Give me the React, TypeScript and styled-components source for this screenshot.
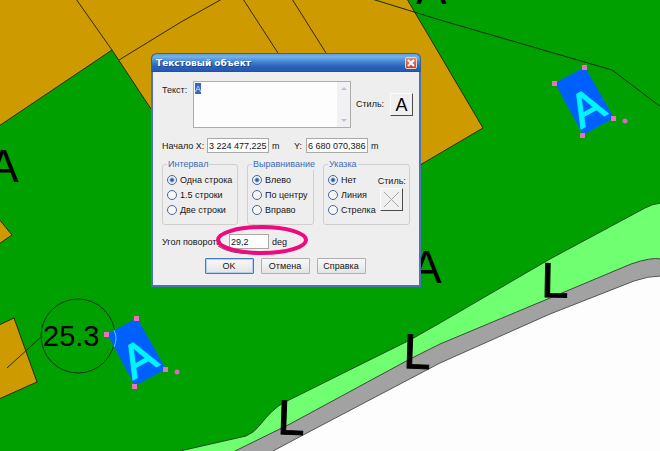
import React, { useState } from "react";
import styled, { createGlobalStyle } from "styled-components";

const GlobalStyle = createGlobalStyle`
  * { box-sizing: border-box; }
  html, body, #root { height: 100%; margin: 0; }
  body { overflow: hidden; background: #00a000; }
  button, input, textarea { font: inherit; color: inherit; }
`;

const Workspace = styled.main`
  position: relative;
  width: 100%;
  height: 100vh;
  overflow: hidden;
  font: 9px/12px "Liberation Sans", Arial, sans-serif;
  color: #161616;
`;

const MapCanvas = styled.svg`
  display: block;
  width: 100%;
  height: 100%;
  font-family: "Liberation Sans", Arial, sans-serif;
`;

const Dialog = styled.section`
  position: absolute;
  left: 151px;
  top: 53px;
  width: 270px;
  border: 2px solid #4b74b8;
  border-top-width: 0;
  border-radius: 6px 6px 0 0;
  background: #eeeeee;
`;

const TitleBar = styled.header`
  display: flex;
  align-items: center;
  justify-content: space-between;
  height: 19px;
  margin: 0 -2px;
  padding: 1px 3px 0 4px;
  border: 1px solid #376197;
  border-bottom-color: #264f9e;
  border-radius: 6px 6px 0 0;
  background: linear-gradient(#5c9ee0 0%, #74b2ec 16%, #4485d0 45%, #2a62b8 75%, #2458b4 100%);
`;

const Title = styled.h1`
  margin: 0;
  font: bold 9px/16px "DejaVu Sans", Verdana, sans-serif;
  color: #ffffff;
  text-shadow: 1px 1px #1c458c;
`;

const CloseButton = styled.button`
  display: flex;
  align-items: center;
  justify-content: center;
  width: 12px;
  height: 12px;
  padding: 0;
  border: 1px solid #f0cfc8;
  border-radius: 2px;
  background: linear-gradient(#dc8d7c, #c6442f);
`;

const Form = styled.form`
  display: flex;
  flex-direction: column;
  padding: 9px 6px 11px 9px;
`;

const TextRow = styled.div`
  display: flex;
  align-items: flex-start;
`;

const FieldLabel = styled.label<{ $width?: number }>`
  flex: none;
  width: ${(p) => (p.$width ? `${p.$width}px` : "auto")};
  white-space: nowrap;
`;

const TextLabel = styled(FieldLabel)`
  padding-top: 3px;
`;

const TextBox = styled.div`
  display: flex;
  flex: 1;
  height: 47px;
  border: 1px solid #adadad;
  background: #fdfdfd;
`;

const SelectedText = styled.div`
  flex: 1;
  display: grid;
  min-width: 0;
  > * { grid-area: 1 / 1; }
`;

const Selection = styled.span`
  width: 6px;
  height: 11px;
  margin: 1px 0 0 1px;
  background: #2f68c0;
`;

const TextArea = styled.textarea`
  z-index: 1;
  width: 100%;
  height: 100%;
  padding: 1px;
  border: 0;
  outline: 0;
  resize: none;
  overflow: hidden;
  background: transparent;
  color: #e4eefc;
`;

const ScrollTrack = styled.span`
  display: flex;
  flex-direction: column;
  justify-content: space-between;
  align-items: center;
  width: 13px;
  padding: 5px 0;
  background: #f1f1f3;
`;

const StyleLabel = styled.label`
  width: 39px;
  padding: 17px 0 0 5px;
`;

const StyleButton = styled.button`
  display: flex;
  align-items: center;
  justify-content: center;
  width: 23px;
  height: 23px;
  padding: 0;
  border: 1px solid #fbfbfb;
  border-right-color: #4c4c4c;
  border-bottom-color: #4c4c4c;
  background: #f0f0f0;
  font-size: 18px;
  line-height: 20px;
  color: #000000;
`;

const TextStyleButton = styled(StyleButton)`
  margin-top: 12px;
`;

const OriginRow = styled.div`
  display: flex;
  align-items: center;
  margin-top: 10px;
  gap: 3px;
`;

const NumberInput = styled.input<{ $width: number }>`
  width: ${(p) => p.$width}px;
  height: 15px;
  padding: 0 1px;
  border: 1px solid #a9a9a9;
  outline: 0;
  background: #fdfdfd;
`;

const Unit = styled.span<{ $width?: number }>`
  width: ${(p) => (p.$width ? `${p.$width}px` : "auto")};
`;

const Groups = styled.div`
  display: grid;
  grid-template-columns: 76fr 67fr 87fr;
  gap: 9px;
  margin: 6px 3px 0 0;
`;

const Group = styled.fieldset`
  display: flex;
  gap: 2px;
  min-width: 0;
  height: 66px;
  margin: 0;
  padding: 2px 4px 0;
  border: 1px solid #cfcfcf;
  border-radius: 3px;
`;

const Legend = styled.legend`
  padding: 0 1px;
  line-height: 11px;
  color: #3c6cb4;
`;

const Options = styled.div`
  display: flex;
  flex-direction: column;
  gap: 3px;
  padding-top: 2px;
`;

const Option = styled.label`
  display: flex;
  align-items: center;
  gap: 3px;
  white-space: nowrap;
`;

const Radio = styled.input`
  appearance: none;
  flex: none;
  width: 10px;
  height: 10px;
  margin: 0;
  border: 1px solid #476696;
  border-radius: 50%;
  background: #f6f6f6;
  &:checked { background: radial-gradient(circle, #245ca8 0 1px, #f6f6f6 3px); }
`;

const PointerStyle = styled.div`
  display: flex;
  flex-direction: column;
  align-items: center;
  gap: 1px;
  padding-top: 3px;
`;

const AngleRow = styled.div`
  position: relative;
  display: flex;
  align-items: center;
  margin-top: 9px;
  gap: 3px;
`;

const Highlight = styled.svg`
  position: absolute;
  left: 51px;
  top: -10px;
  pointer-events: none;
`;

const Actions = styled.div`
  display: flex;
  justify-content: center;
  gap: 7px;
  margin: 9px 5px 0 0;
`;

const ActionButton = styled.button<{ $primary?: boolean }>`
  width: 49px;
  height: 16px;
  padding: 0;
  border: 1px solid ${(p) => (p.$primary ? "#4d78bc" : "#b0b0b0")};
  border-radius: 1px;
  box-shadow: ${(p) => (p.$primary ? "inset 0 0 0 1px #b4cdf0" : "none")};
  background: linear-gradient(#f8f8f8, #e4e4e4);
  line-height: 13px;
`;

function SelectedObject({ x, y }: { x: number; y: number }) {
  const handles = [[0, 0], [30, -16], [59, 35], [28, 52]];
  return (
    <g transform={`translate(${x} ${y})`}>
      <polygon points="0,0 30,-16 59,35 28,52" fill="#0060ff" />
      <text transform="translate(26 46) rotate(-29.2)" fontSize="47" fill="#00f6ff" stroke="#00f6ff">A</text>
      {handles.map(([hx, hy]) => (
        <rect key={hx} x={hx - 3} y={hy - 2} width="5" height="5" fill="#ea72b8" />
      ))}
      <circle cx="70" cy="38" r="2.5" fill="#d868c4" />
    </g>
  );
}

function TerrainMap() {
  return (
    <MapCanvas viewBox="0 0 660 451" preserveAspectRatio="xMidYMid slice" role="img" aria-label="Карта">
      <rect width="660" height="451" fill="#00a000" />
      <g fill="#cd9a00" stroke="#2b2700" strokeWidth="1">
        <path d="M-1 -1H407L483 128L330 218L151 109L112 50L-1 126Z" />
        <path d="M-1 219L12 235L-1 244Z" />
        <path d="M-1 325L14 318L37 382L-1 399Z" />
      </g>
      <g fill="none" stroke="#33280a">
        <path d="M76 -1L112 50M119 60L181 22L222 -1M243 -1L278 53M292 -1L326 53" />
        <path d="M372 -1L440 20L612 70L661 107" stroke="#102d08" />
      </g>
      <path d="M180 451L246 436Q254 433 260 425Q273 408 285 402L410 340L440 323L550 259L645 208Q652 204 661 203V460H180Z" fill="#70ff70" stroke="#1e4e1e" />
      <path d="M235 451L290 424L410 359L440 344L550 298L631 264Q651 257 661 259V460H235Z" fill="#a2a2a2" stroke="#3e4a3e" />
      <path d="M273 451L305 434L440 363L550 314L634 281Q648 276 661 276V460H273Z" fill="#fdfdfd" stroke="#555555" />
      <circle cx="78" cy="336" r="37" fill="none" stroke="#103410" />
      <path d="M7 368L41 337" stroke="#22300a" />
      <text x="43" y="346" fontSize="29">25.3</text>
      <g fontSize="46">
        <text x="-12" y="182">A</text>
        <text x="416" y="4">A</text>
        <text x="411" y="283">A</text>
      </g>
      <g fontSize="49" stroke="#000000" strokeWidth="1">
        <text transform="translate(277 434) rotate(2)">L</text>
        <text transform="translate(403 368) rotate(2)">L</text>
        <text transform="translate(541 297) rotate(1)">L</text>
      </g>
      <SelectedObject x={107} y={334} />
      <path d="M114 330Q118 338 114 347" fill="none" stroke="#5dcfee" />
      <SelectedObject x={555} y={83} />
    </MapCanvas>
  );
}

function RadioGroup({ name, options }: { name: string; options: string[] }) {
  return (
    <Options>
      {options.map((option, index) => (
        <Option key={option}>
          <Radio type="radio" name={name} defaultChecked={index === 0} />
          {option}
        </Option>
      ))}
    </Options>
  );
}

export default function App() {
  const [text, setText] = useState("A");
  return (
    <Workspace>
      <GlobalStyle />
      <TerrainMap />
      <Dialog role="dialog" aria-labelledby="dialog-title">
        <TitleBar>
          <Title id="dialog-title">Текстовый объект</Title>
          <CloseButton type="button" aria-label="Закрыть">
            <svg width="8" height="8" viewBox="0 0 8 8" stroke="#ffffff" strokeWidth="2"><path d="M1 1L7 7M7 1L1 7" /></svg>
          </CloseButton>
        </TitleBar>
        <Form onSubmit={(e) => e.preventDefault()}>
          <TextRow>
            <TextLabel htmlFor="object-text" $width={31}>Текст:</TextLabel>
            <TextBox>
              <SelectedText>
                <Selection />
                <TextArea id="object-text" value={text} onChange={(e) => setText(e.target.value)} />
              </SelectedText>
              <ScrollTrack>
                <svg width="6" height="3" fill="#b4c8e0"><path d="M3 0L6 3H0Z" /></svg>
                <svg width="6" height="3" fill="#b4c8e0"><path d="M0 0H6L3 3Z" /></svg>
              </ScrollTrack>
            </TextBox>
            <StyleLabel htmlFor="text-style">Стиль:</StyleLabel>
            <TextStyleButton id="text-style" type="button">A</TextStyleButton>
          </TextRow>
          <OriginRow>
            <FieldLabel htmlFor="origin-x" $width={42}>Начало X:</FieldLabel>
            <NumberInput id="origin-x" $width={62} defaultValue="3 224 477,225" />
            <Unit $width={19}>m</Unit>
            <FieldLabel htmlFor="origin-y" $width={9}>Y:</FieldLabel>
            <NumberInput id="origin-y" $width={62} defaultValue="6 680 070,386" />
            <Unit>m</Unit>
          </OriginRow>
          <Groups>
            <Group>
              <Legend>Интервал</Legend>
              <RadioGroup name="spacing" options={["Одна строка", "1.5 строки", "Две строки"]} />
            </Group>
            <Group>
              <Legend>Выравнивание</Legend>
              <RadioGroup name="align" options={["Влево", "По центру", "Вправо"]} />
            </Group>
            <Group>
              <Legend>Указка</Legend>
              <RadioGroup name="pointer" options={["Нет", "Линия", "Стрелка"]} />
              <PointerStyle>
                <label htmlFor="pointer-style">Стиль:</label>
                <StyleButton id="pointer-style" type="button" aria-label="Стиль">
                  <svg width="17" height="17" stroke="#a8a8a8"><path d="M1 1L16 16M16 1L1 16" /></svg>
                </StyleButton>
              </PointerStyle>
            </Group>
          </Groups>
          <AngleRow>
            <FieldLabel htmlFor="angle" $width={64}>Угол поворота</FieldLabel>
            <NumberInput id="angle" $width={40} defaultValue="29,2" />
            <Unit>deg</Unit>
            <Highlight width="96" height="32" fill="none" aria-hidden="true">
              <path d="M5 22Q16 30 43 30" stroke="#70405c" />
              <ellipse cx="49" cy="16" rx="44" ry="13" stroke="#f0087c" strokeWidth="4" />
            </Highlight>
          </AngleRow>
          <Actions>
            <ActionButton type="submit" $primary>OK</ActionButton>
            <ActionButton type="button">Отмена</ActionButton>
            <ActionButton type="button">Справка</ActionButton>
          </Actions>
        </Form>
      </Dialog>
    </Workspace>
  );
}
